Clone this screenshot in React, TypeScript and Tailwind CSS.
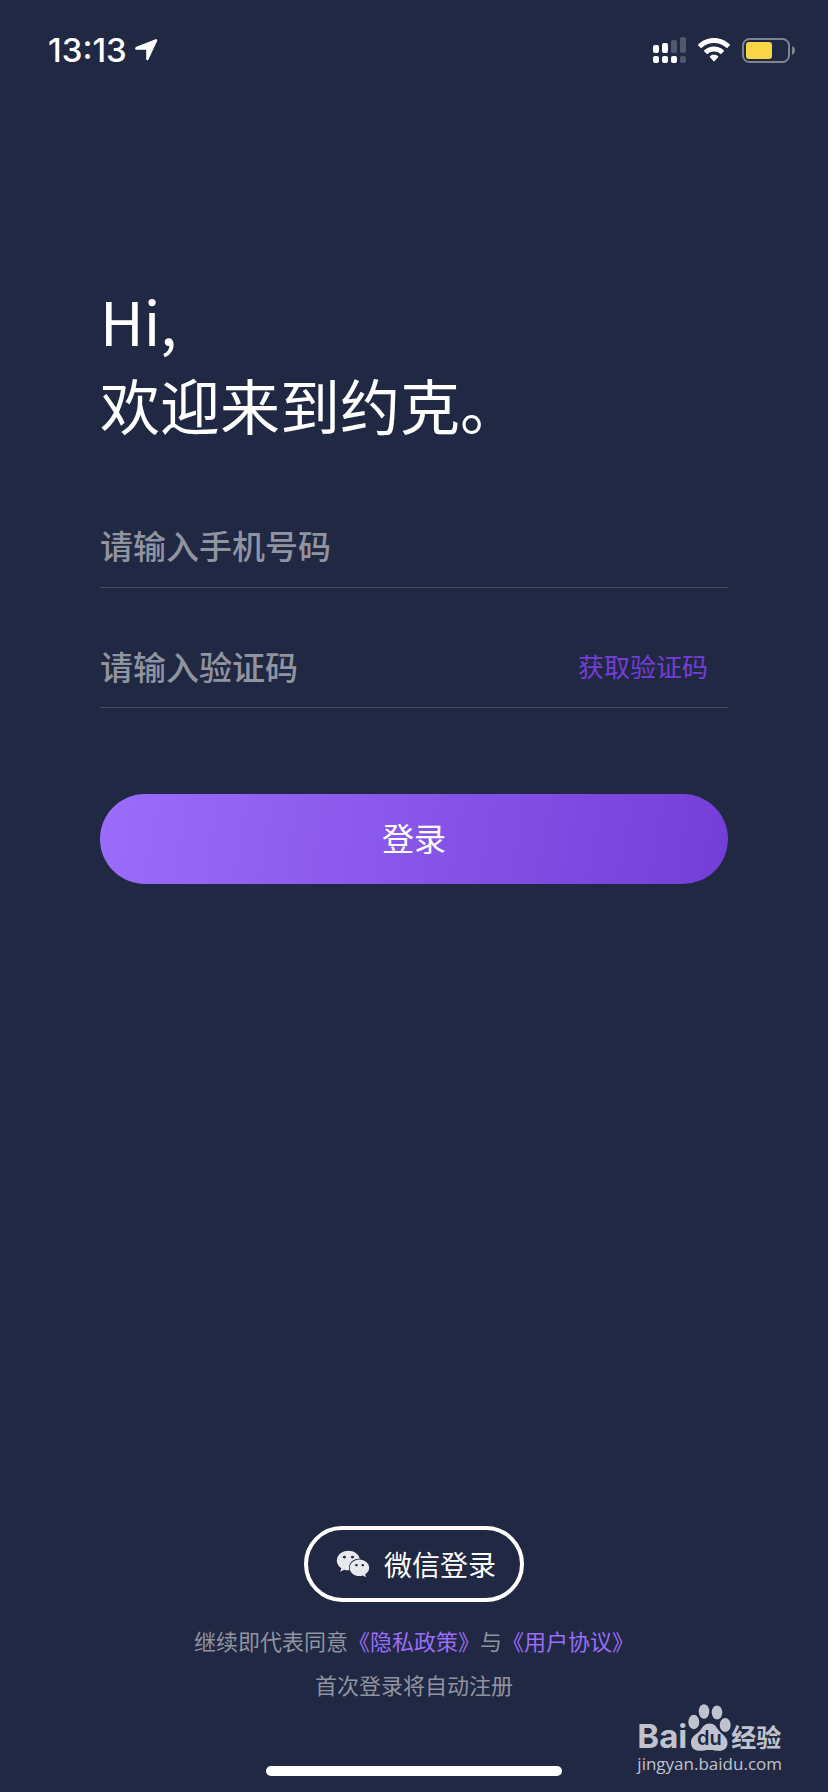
import { FormEvent, FunctionComponent, useState } from "react";
import { FaWeixin } from "react-icons/fa";

const StatusBar: FunctionComponent = () => {
  return (
    <header className="flex h-[100px] items-center justify-between pl-12 pr-[33px] text-white">
      <div className="flex items-center gap-2">
        <span className="font-['Inter',sans-serif] text-[33px] font-medium leading-10">
          13:13
        </span>
        <svg className="h-[22px] w-[23px]" viewBox="0 0 23 22" fill="currentColor">
          <path d="M20.6.3 1.3 7.800C-.3 8.500-.2 10.700 1.500 10.700H10.300C10.900 10.700 11.200 11 11.200 11.600V19.900C11.200 21.500 12.900 21.700 13.600 20.200L22 2.200C22.600.8 22-.3 20.600.3Z" />
        </svg>
      </div>
      <div className="flex items-center gap-3">
        {/* dual sim signal */}
        <svg className="h-[27px] w-[33px]" viewBox="0 0 33 27" fill="currentColor">
          <rect x="0" y="8" width="6" height="8" rx="2" />
          <rect x="9" y="6" width="6" height="10" rx="2" />
          <rect x="18" y="3" width="6" height="13" rx="2" opacity=".22" />
          <rect x="27" y="0" width="6" height="16" rx="2" opacity=".22" />
          <rect x="0" y="19" width="6" height="7" rx="2" />
          <rect x="9" y="19" width="6" height="7" rx="2" />
          <rect x="18" y="19" width="6" height="7" rx="2" />
          <rect x="27" y="19" width="6" height="7" rx="2" opacity=".22" />
        </svg>
        {/* wifi */}
        <svg className="h-6 w-8" viewBox="0 0 32 24" fill="currentColor">
          <path d="M16 0C9.900 0 4.400 2.400.3 6.300a.8.8 0 0 0 0 1.200l2.200 2.300c.3.300.8.300 1.200 0C6.900 6.900 11.200 5.100 16 5.100s9.100 1.800 12.300 4.700c.4.300.9.300 1.200 0l2.200-2.300a.8.8 0 0 0 0-1.200C27.600 2.400 22.100 0 16 0Z" />
          <path d="M16 8.500c-3.700 0-7.100 1.400-9.700 3.700a.8.8 0 0 0 0 1.200l2.300 2.300c.3.300.8.300 1.200 0 1.600-1.400 3.800-2.300 6.200-2.300s4.600.9 6.200 2.300c.4.300.9.300 1.200 0l2.300-2.300a.8.8 0 0 0 0-1.200A14.600 14.600 0 0 0 16 8.500Z" />
          <path d="M16 16.800c-1.500 0-2.900.5-3.900 1.400a.8.8 0 0 0 0 1.200l3.300 3.700c.3.400.9.400 1.200 0l3.300-3.700a.8.8 0 0 0 0-1.200c-1-.9-2.400-1.400-3.900-1.400Z" />
        </svg>
        {/* battery */}
        <svg className="h-[25px] w-[53px]" viewBox="0 0 53 25">
          <rect x="1" y="1" width="46" height="23" rx="6.500" fill="none" stroke="#7f838f" strokeWidth="2" />
          <rect x="4" y="4" width="26" height="17" rx="3" fill="#f8d648" />
          <path d="M50 8v9c1.800-.8 3-2.500 3-4.500S51.800 8.800 50 8Z" fill="#7f838f" />
        </svg>
      </div>
    </header>
  );
};

const Watermark: FunctionComponent = () => {
  return (
    <div className="absolute bottom-[18px] right-[46px] flex flex-col text-[#c0c3cd]">
      <div className="flex items-end">
        <span className="font-['Inter',sans-serif] text-[33px] font-bold leading-9">
          Bai
        </span>
        <span className="relative flex h-[50px] w-[44px] justify-center">
          <svg className="h-[47px] w-[43px]" viewBox="0 0 43 47" fill="currentColor">
            <ellipse cx="5.800" cy="18" rx="5.500" ry="7.200" />
            <ellipse cx="16" cy="7.500" rx="5.300" ry="7.300" />
            <ellipse cx="29" cy="8.500" rx="5.300" ry="7" />
            <ellipse cx="37.200" cy="21" rx="5.500" ry="7" />
            <path d="M21.500 19.500c4.500 0 6.500 2.800 9 6.500 3 4.200 9 6.500 9 13 0 5-3.700 7.800-8 7.800-3.500 0-6-.8-10-.8s-6.500.8-10 .8c-5 0-8.500-2.800-8.500-8.300 0-6.500 6.500-8.500 9.500-12.500 2.500-3.600 4.500-6.500 9-6.500Z" />
          </svg>
          <span className="absolute bottom-1 left-0 w-full text-center font-['Inter',sans-serif] text-xl font-semibold leading-6 text-[#212843]">
            du
          </span>
        </span>
        <span className="font-['Noto_Sans_CJK_SC',sans-serif] text-[25px] font-bold leading-9">
          经验
        </span>
      </div>
      <span className="font-['Open_Sans',sans-serif] text-[17px] font-medium leading-5">
        jingyan.baidu.com
      </span>
    </div>
  );
};

const App: FunctionComponent = () => {
  const [phone, setPhone] = useState("");
  const [code, setCode] = useState("");

  const handleSubmit = (e: FormEvent) => {
    e.preventDefault();
  };

  return (
    <div className="relative flex min-h-screen flex-col bg-[#212843] font-['Noto_Sans_CJK_SC',sans-serif]">
      <StatusBar />

      <main className="flex flex-1 flex-col px-[100px] pt-[178px]">
        <h1 className="text-6xl leading-[84px] text-white">
          Hi,
          <br />
          欢迎来到约克。
        </h1>

        <form className="mt-[62px] flex flex-col" onSubmit={handleSubmit}>
          <div className="flex h-20 items-center border-b border-[#474c63] pb-1.5">
            <input
              type="tel"
              aria-label="手机号码"
              placeholder="请输入手机号码"
              value={phone}
              onChange={(e) => setPhone(e.target.value)}
              className="w-full min-w-0 bg-transparent text-[33px] font-medium leading-12 text-white outline-none placeholder:text-[#9094a0]"
            />
          </div>
          <div className="mt-10 flex h-20 items-center border-b border-[#474c63] pr-5 pb-1">
            <input
              type="text"
              aria-label="验证码"
              placeholder="请输入验证码"
              value={code}
              onChange={(e) => setCode(e.target.value)}
              className="min-w-0 flex-1 bg-transparent text-[33px] font-medium leading-12 text-white outline-none placeholder:text-[#9094a0]"
            />
            <button type="button" className="text-[26px] leading-10 text-[#743dd8]">
              获取验证码
            </button>
          </div>
          <button
            type="submit"
            className="mt-[86px] h-[90px] rounded-full bg-linear-[100deg,#9b6dfa,#743dd8] pb-1 text-[32px] text-white"
          >
            登录
          </button>
        </form>
      </main>

      <footer className="flex flex-col items-center pb-4">
        <button
          type="button"
          className="flex h-[76px] w-[220px] items-center justify-center gap-3.5 rounded-full border-4 border-white pl-1 text-[28px] text-white"
        >
          <FaWeixin className="size-[34px] text-[#e8e9ec]" />
          微信登录
        </button>
        <div className="mt-4 text-center text-[22px] leading-11 text-[#9094a0]">
          <p>
            继续即代表同意
            <a href="#privacy" className="text-[#9b6dfa]">《隐私政策》</a>
            与
            <a href="#agreement" className="text-[#9b6dfa]">《用户协议》</a>
          </p>
          <p>首次登录将自动注册</p>
        </div>
        <div className="mt-[60px] h-2.5 w-[296px] rounded-full bg-white" />
      </footer>

      <Watermark />
    </div>
  );
};

export default App;
